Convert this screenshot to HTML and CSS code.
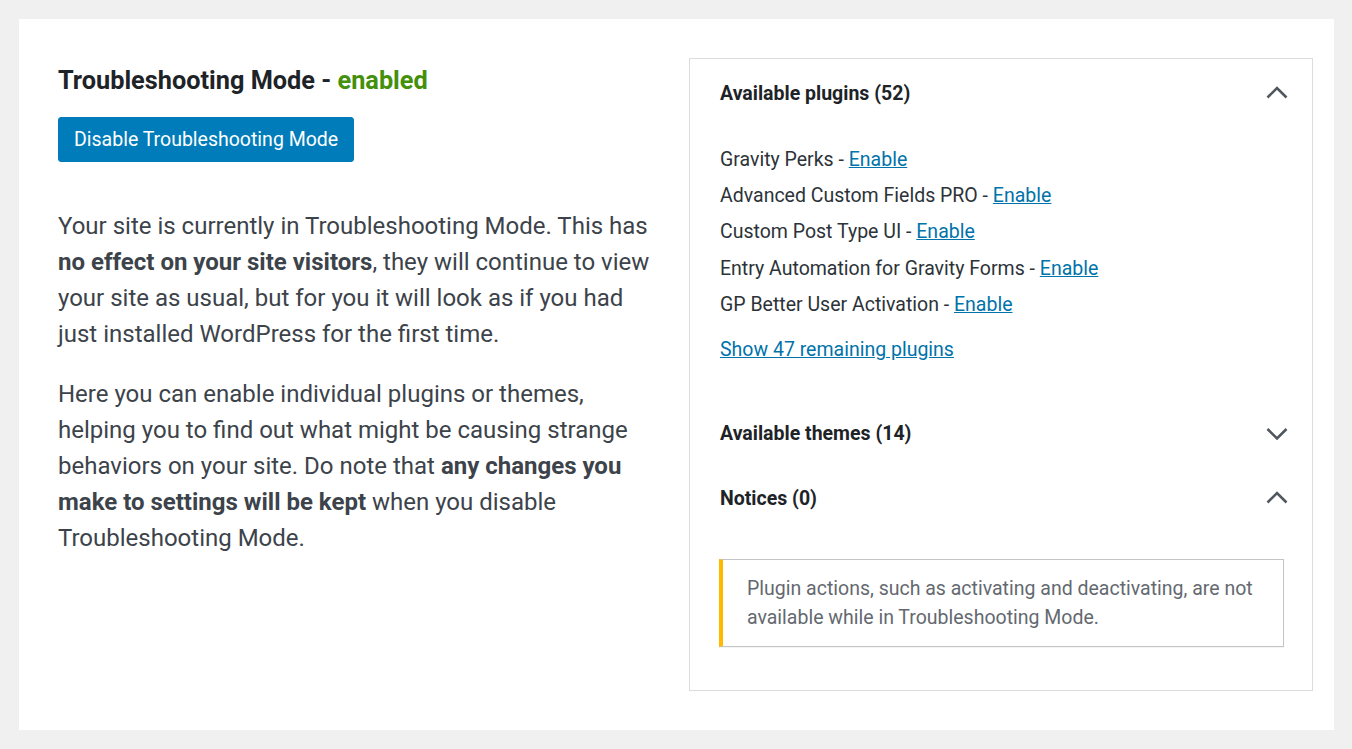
FILE: index.html
```html
<!DOCTYPE html>
<html lang="en">
<head>
<meta charset="utf-8">
<title>Troubleshooting Mode</title>
<link rel="stylesheet" href="styles.css">
</head>
<body>
<div class="card">
  <div class="intro">
    <h2 class="title">Troubleshooting Mode - <span class="enabled">enabled</span></h2>
    <button class="btn" type="button">Disable Troubleshooting Mode</button>
    <p class="text">Your site is currently in Troubleshooting Mode. This has <strong>no effect on your site visitors</strong>, they will continue to view your site as usual, but for you it will look as if you had just installed WordPress for the first time.</p>
    <p class="text">Here you can enable individual plugins or themes, helping you to find out what might be causing strange behaviors on your site. Do note that <strong>any changes you make to settings will be kept</strong> when you disable Troubleshooting Mode.</p>
  </div>
  <div class="panel">
    <div class="sec-head">
      <span class="sec-title">Available plugins (52)</span>
      <svg class="chev" width="22" height="16" viewBox="0 0 22 16"><polyline points="1.5,11.5 11,2 20.5,11.5" fill="none" stroke="#50575e" stroke-width="2.6"/></svg>
    </div>
    <ul class="plugins">
      <li>Gravity Perks - <a href="#">Enable</a></li>
      <li>Advanced Custom Fields PRO - <a href="#">Enable</a></li>
      <li>Custom Post Type UI - <a href="#">Enable</a></li>
      <li>Entry Automation for Gravity Forms - <a href="#">Enable</a></li>
      <li>GP Better User Activation - <a href="#">Enable</a></li>
    </ul>
    <a class="more" href="#">Show 47 remaining plugins</a>
    <div class="sec-head themes">
      <span class="sec-title">Available themes (14)</span>
      <svg class="chev" width="22" height="16" viewBox="0 0 22 16"><polyline points="1.5,3 11,12.5 20.5,3" fill="none" stroke="#50575e" stroke-width="2.6"/></svg>
    </div>
    <div class="sec-head">
      <span class="sec-title">Notices (0)</span>
      <svg class="chev" width="22" height="16" viewBox="0 0 22 16"><polyline points="1.5,11.5 11,2 20.5,11.5" fill="none" stroke="#50575e" stroke-width="2.6"/></svg>
    </div>
    <div class="notice">Plugin actions, such as activating and deactivating, are not available while in Troubleshooting Mode.</div>
  </div>
</div>
</body>
</html>
```
FILE: styles.css
```css
* { box-sizing: border-box; }
html, body { margin: 0; padding: 0; }
body {
  background: #f0f0f1;
  padding: 19px 18px 19px 19px;
  font-family: Roboto, "Liberation Sans", Arial, sans-serif;
  color: #3c434a;
}
.card {
  background: #fff;
  height: 711px;
  padding: 39px 21px 39px 39px;
  display: grid;
  grid-template-columns: 1fr 624px;
  column-gap: 22px;
  align-items: start;
}
.intro { padding-top: 8px; }
.title {
  margin: 0;
  font-size: 25.3px;
  line-height: 30px;
  font-weight: 700;
  color: #1d2327;
}
.enabled { color: #44900c; }
.btn {
  display: block;
  margin-top: 21px;
  height: 45px;
  padding: 0 15px;
  background: #007cba;
  border: 1px solid #007cba;
  border-radius: 3px;
  color: #fff;
  font-family: inherit;
  font-size: 19.5px;
  line-height: 43px;
}
.text {
  margin: 0;
  font-size: 24px;
  line-height: 36px;
  color: #3c434a;
}
.btn + .text { margin-top: 46px; }
.text + .text { margin-top: 24px; }
.text strong { font-weight: 700; }
.panel {
  border: 1px solid #dcdcde;
  height: 633px;
  padding: 2px 24px 0 30px;
}
.sec-head {
  display: flex;
  justify-content: space-between;
  align-items: center;
  height: 65px;
}
.sec-title {
  font-size: 19.5px;
  font-weight: 700;
  color: #1d2327;
}
.chev { display: block; }
.plugins {
  list-style: none;
  margin: 16px 0 0;
  padding: 0;
  font-size: 19.5px;
  line-height: 36.2px;
  color: #2c3338;
}
a { color: #0073aa; text-decoration: underline; }
.more {
  display: block;
  margin-top: 9px;
  font-size: 19.5px;
  line-height: 36px;
}
.themes { margin-top: 33px; }
.notice {
  margin: 28px 4px 0 -1px;
  border: 1px solid #c3c4c7;
  border-left: 4px solid #ffb900;
  box-shadow: 0 1px 1px rgba(0,0,0,.04);
  padding: 14px 20px 14px 24px;
  font-size: 19.5px;
  line-height: 29px;
  color: #646970;
}
```
